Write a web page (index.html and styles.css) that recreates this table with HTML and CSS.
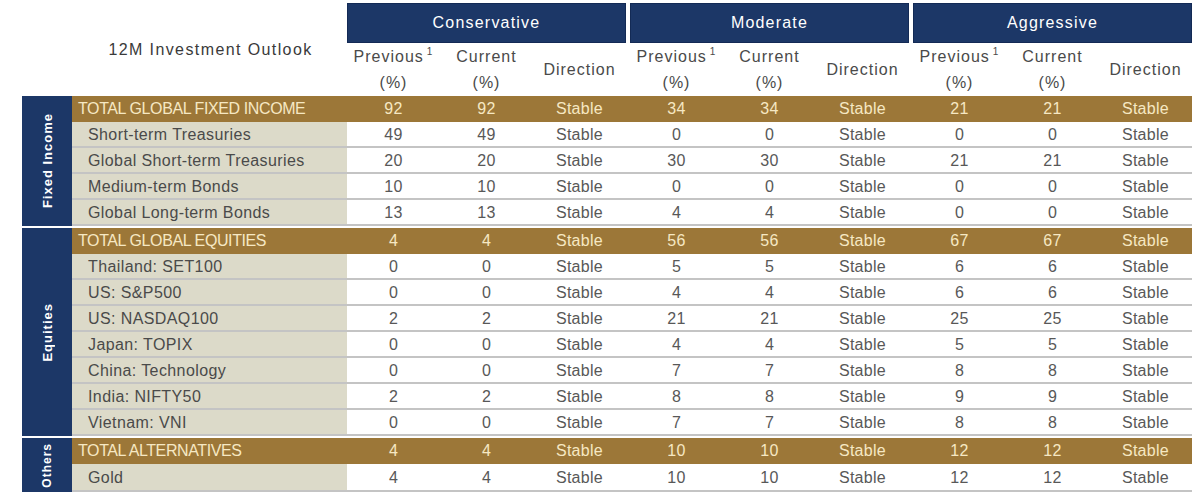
FILE: index.html
```html
<!DOCTYPE html>
<html lang="en">
<head>
<meta charset="utf-8">
<title>12M Investment Outlook</title>
<link rel="stylesheet" href="styles.css">
</head>
<body>
<div class="outlook">
  <div class="head">
    <div class="title">12M Investment Outlook</div>
    <div class="profile">
      <div class="profile-name">Conservative</div>
      <div class="subheads">
        <div class="sub">Previous<sup>1</sup><br>(%)</div>
        <div class="sub">Current<br>(%)</div>
        <div class="sub">Direction</div>
      </div>
    </div>
    <div class="profile">
      <div class="profile-name">Moderate</div>
      <div class="subheads">
        <div class="sub">Previous<sup>1</sup><br>(%)</div>
        <div class="sub">Current<br>(%)</div>
        <div class="sub">Direction</div>
      </div>
    </div>
    <div class="profile">
      <div class="profile-name">Aggressive</div>
      <div class="subheads">
        <div class="sub">Previous<sup>1</sup><br>(%)</div>
        <div class="sub">Current<br>(%)</div>
        <div class="sub">Direction</div>
      </div>
    </div>
  </div>

  <div class="section">
    <div class="side"><span>Fixed Income</span></div>
    <div class="rows">
      <div class="row total"><div class="name">TOTAL GLOBAL FIXED INCOME</div><div>92</div><div>92</div><div class="gap">Stable</div><div>34</div><div>34</div><div class="gap">Stable</div><div>21</div><div>21</div><div>Stable</div></div>
      <div class="row"><div class="name">Short-term Treasuries</div><div>49</div><div>49</div><div class="gap">Stable</div><div>0</div><div>0</div><div class="gap">Stable</div><div>0</div><div>0</div><div>Stable</div></div>
      <div class="row"><div class="name">Global Short-term Treasuries</div><div>20</div><div>20</div><div class="gap">Stable</div><div>30</div><div>30</div><div class="gap">Stable</div><div>21</div><div>21</div><div>Stable</div></div>
      <div class="row"><div class="name">Medium-term Bonds</div><div>10</div><div>10</div><div class="gap">Stable</div><div>0</div><div>0</div><div class="gap">Stable</div><div>0</div><div>0</div><div>Stable</div></div>
      <div class="row"><div class="name">Global Long-term Bonds</div><div>13</div><div>13</div><div class="gap">Stable</div><div>4</div><div>4</div><div class="gap">Stable</div><div>0</div><div>0</div><div>Stable</div></div>
    </div>
  </div>

  <div class="section">
    <div class="side"><span>Equities</span></div>
    <div class="rows">
      <div class="row total"><div class="name">TOTAL GLOBAL EQUITIES</div><div>4</div><div>4</div><div class="gap">Stable</div><div>56</div><div>56</div><div class="gap">Stable</div><div>67</div><div>67</div><div>Stable</div></div>
      <div class="row"><div class="name">Thailand: SET100</div><div>0</div><div>0</div><div class="gap">Stable</div><div>5</div><div>5</div><div class="gap">Stable</div><div>6</div><div>6</div><div>Stable</div></div>
      <div class="row"><div class="name">US: S&amp;P500</div><div>0</div><div>0</div><div class="gap">Stable</div><div>4</div><div>4</div><div class="gap">Stable</div><div>6</div><div>6</div><div>Stable</div></div>
      <div class="row"><div class="name">US: NASDAQ100</div><div>2</div><div>2</div><div class="gap">Stable</div><div>21</div><div>21</div><div class="gap">Stable</div><div>25</div><div>25</div><div>Stable</div></div>
      <div class="row"><div class="name">Japan: TOPIX</div><div>0</div><div>0</div><div class="gap">Stable</div><div>4</div><div>4</div><div class="gap">Stable</div><div>5</div><div>5</div><div>Stable</div></div>
      <div class="row"><div class="name">China: Technology</div><div>0</div><div>0</div><div class="gap">Stable</div><div>7</div><div>7</div><div class="gap">Stable</div><div>8</div><div>8</div><div>Stable</div></div>
      <div class="row"><div class="name">India: NIFTY50</div><div>2</div><div>2</div><div class="gap">Stable</div><div>8</div><div>8</div><div class="gap">Stable</div><div>9</div><div>9</div><div>Stable</div></div>
      <div class="row"><div class="name">Vietnam: VNI</div><div>0</div><div>0</div><div class="gap">Stable</div><div>7</div><div>7</div><div class="gap">Stable</div><div>8</div><div>8</div><div>Stable</div></div>
    </div>
  </div>

  <div class="section">
    <div class="side side-small"><span>Others</span></div>
    <div class="rows">
      <div class="row total"><div class="name">TOTAL ALTERNATIVES</div><div>4</div><div>4</div><div class="gap">Stable</div><div>10</div><div>10</div><div class="gap">Stable</div><div>12</div><div>12</div><div>Stable</div></div>
      <div class="row tall"><div class="name">Gold</div><div>4</div><div>4</div><div class="gap">Stable</div><div>10</div><div>10</div><div class="gap">Stable</div><div>12</div><div>12</div><div>Stable</div></div>
    </div>
  </div>
</div>
</body>
</html>
```

FILE: styles.css
```css
* { box-sizing: border-box; }

html, body {
  margin: 0;
  background: #ffffff;
}

body {
  font-family: "Liberation Sans", Arial, sans-serif;
  color: #555555;
}

.outlook {
  padding: 3px 0 0 22px;
  width: 1200px;
}

/* ---------- header ---------- */
.head {
  display: flex;
  gap: 4px;
}

.title {
  width: 321px;
  align-self: center;
  padding-left: 56px;
  text-align: center;
  font-size: 16px;
  letter-spacing: 1.4px;
  color: #3a3a3a;
}

.profile {
  width: 279px;
  display: flex;
  flex-direction: column;
}

.profile-name {
  height: 40px;
  background: #1c3767;
  border: 1px solid #132a55;
  color: #ffffff;
  font-size: 16px;
  letter-spacing: 1.2px;
  display: flex;
  align-items: center;
  justify-content: center;
}

.subheads {
  height: 53px;
  display: grid;
  grid-template-columns: 93px 93px 93px;
  align-items: center;
}

.sub {
  text-align: center;
  font-size: 16px;
  line-height: 26px;
  letter-spacing: 1px;
  color: #4a4a4a;
}

.sub sup {
  font-size: 10px;
  line-height: 0;
  vertical-align: 7px;
  margin-left: 3px;
}

/* ---------- body ---------- */
.section {
  display: flex;
  margin-top: 2px;
}

.head + .section {
  margin-top: 0;
}

.side {
  width: 50px;
  background: #1c3767;
  display: flex;
  align-items: center;
  justify-content: center;
}

.side span {
  writing-mode: vertical-rl;
  transform: rotate(180deg);
  color: #ffffff;
  font-weight: bold;
  font-size: 13px;
  letter-spacing: 1px;
}

.side-small span {
  font-size: 12px;
}

.rows {
  width: 1120px;
}

.row {
  height: 26px;
  display: grid;
  grid-template-columns: 275px 93px 93px 97px 93px 93px 97px 93px 93px 93px;
  align-items: center;
  border-bottom: 2px solid #c4c4c4;
  font-size: 16px;
  letter-spacing: 0.3px;
  color: #585858;
  text-align: center;
}

.row.tall {
  height: 28px;
}

.row > div {
  height: 100%;
  display: flex;
  align-items: center;
  justify-content: center;
  padding-top: 1px;
}

.row .gap {
  padding-right: 4px;
}

.row .name {
  justify-content: flex-start;
  background: #dcdac9;
  padding-left: 16px;
  letter-spacing: 0.4px;
  color: #4a4a4a;
}

.row.total {
  background: #9c7738;
  border-bottom: none;
  color: #f6e8c3;
}

.row.total > div {
  padding-top: 0;
}

.row.total .name {
  background: transparent;
  padding-left: 6px;
  letter-spacing: -0.4px;
  color: #f6e8c3;
}
```
